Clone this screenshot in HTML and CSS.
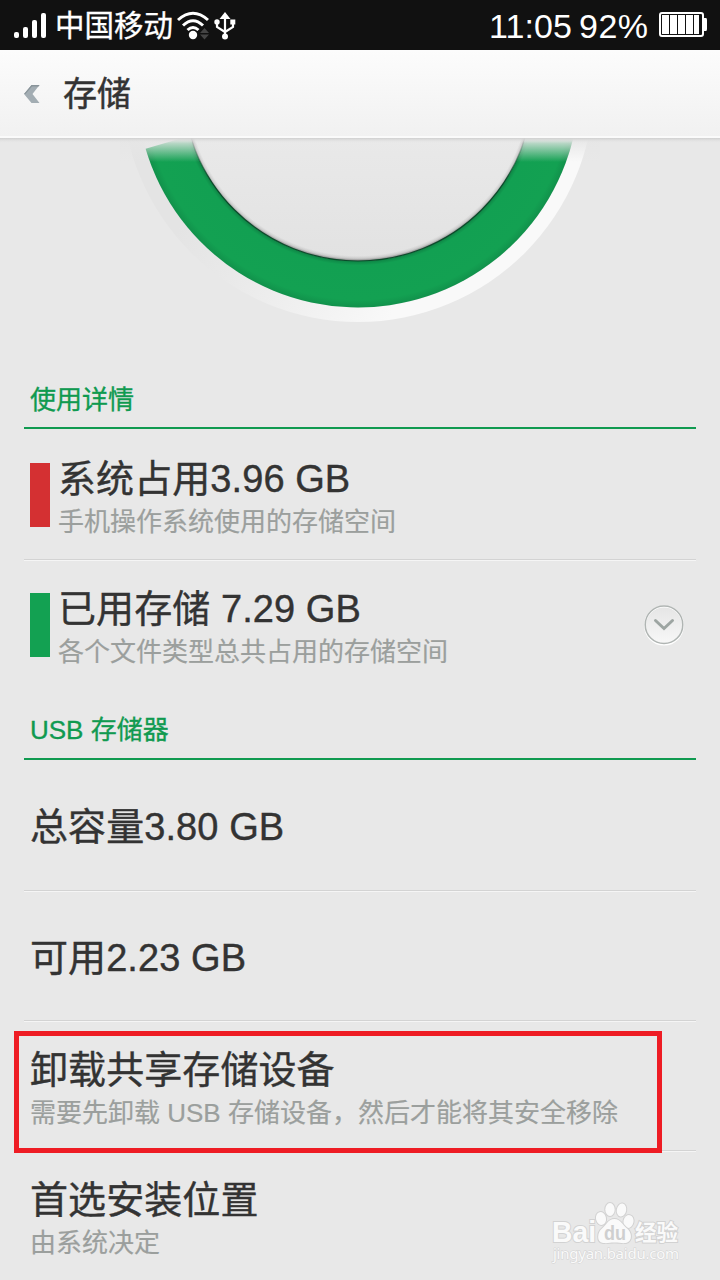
FILE: index.html
```html
<!DOCTYPE html>
<html lang="zh-CN">
<head>
<meta charset="utf-8">
<title>存储</title>
<link rel="stylesheet" href="styles.css">
</head>
<body>
<div class="screen">
  <div class="status">
    <svg class="signal" width="34" height="28" viewBox="0 0 34 28" fill="#fff"><rect x="0" y="21" width="5" height="6" rx="2"/><rect x="9" y="16" width="5" height="11" rx="2"/><rect x="18" y="9" width="5" height="18" rx="2"/><rect x="27" y="2" width="5" height="25" rx="2"/></svg>
    <span class="carrier">中国移动</span>
    <svg class="wifi" width="34" height="30" viewBox="0 0 34 30" fill="none" stroke="#fff" stroke-width="3"><path d="M1 10Q16 -3.500 31 10M6 15.500Q16 6 26 15.500M10.500 20Q16 15 21.500 20"/><circle cx="16" cy="25" r="4.200" fill="#fff" stroke="none"/><path d="M23 23h9l-4.500-5zM23 24.500h9l-4.500 5z" fill="#444" stroke="none"/></svg>
    <svg class="usb" width="22" height="30" viewBox="0 0 22 30" fill="none" stroke="#fff" stroke-width="2.200"><path d="M11 25V6M11 22L3 17V11M11 22l8-5v-5"/><path d="M5.500 9L11 2l5.500 7z" fill="#fff" stroke="none"/><circle cx="11" cy="26.500" r="3" fill="#fff" stroke="none"/><circle cx="3" cy="12" r="2.700" fill="#fff" stroke="none"/><path d="M16.300 9.500h5v5h-5z" fill="#fff" stroke="none"/></svg>
    <span class="clock">11:05</span>
    <span class="percent">92%</span>
    <svg class="battery" width="49" height="26" viewBox="0 0 49 26"><rect x="1" y="1" width="43" height="23" rx="2" fill="none" stroke="#fff" stroke-width="2"/><path d="M45 6h2q1 0 1 2v9q0 2-1 2h-2z" fill="#fff"/><path d="M3 3h7v19H3zM11 3h7v19h-7zM19 3h7v19h-7zM27 3h7v19h-7zM35 3h5v19h-5z" fill="#fff"/></svg>
  </div>
  <div class="bar">
    <svg width="16" height="20" viewBox="0 0 16 20"><path d="M7.500 1H15.500L8.500 10l7 9H7.500L0 10z" fill="#a3adb3"/><path d="M7.500 1H15.500l-1 1.500H8L1.500 10H0z" fill="#89949a"/></svg>
    <h1>存储</h1>
  </div>
  <div class="chart">
    <svg width="720" height="226" viewBox="0 138 720 226">
      <defs>
        <linearGradient id="rim" gradientUnits="userSpaceOnUse" x1="205" y1="180" x2="405" y2="290"><stop offset="0" stop-color="#e4e4e4"/><stop offset=".3" stop-color="#e9e9e9"/><stop offset=".75" stop-color="#f3f3f3"/><stop offset="1" stop-color="#f9f9f9"/></linearGradient>
        <linearGradient id="fade" gradientUnits="userSpaceOnUse" x1="0" y1="138" x2="0" y2="162"><stop offset="0" stop-color="#e6e6e6"/><stop offset=".15" stop-color="#e6e6e6" stop-opacity=".85"/><stop offset="1" stop-color="#e6e6e6" stop-opacity="0"/></linearGradient>
        <linearGradient id="disc" gradientUnits="userSpaceOnUse" x1="0" y1="138" x2="0" y2="261"><stop offset="0" stop-color="#e9e9e9"/><stop offset="1" stop-color="#e2e2e2"/></linearGradient>
        <linearGradient id="line" gradientUnits="userSpaceOnUse" x1="0" y1="140" x2="0" y2="180"><stop offset="0" stop-color="#0b5a32" stop-opacity="0"/><stop offset="1" stop-color="#0b4a2a"/></linearGradient>
        <radialGradient id="green" gradientUnits="userSpaceOnUse" cx="358" cy="86" r="221.500"><stop offset=".79" stop-color="#0e8344"/><stop offset=".81" stop-color="#12a052"/><stop offset=".965" stop-color="#13a152"/><stop offset="1" stop-color="#11914b"/></radialGradient>
        <radialGradient id="edge" gradientUnits="userSpaceOnUse" cx="358" cy="84" r="177"><stop offset=".97" stop-color="#999" stop-opacity="0"/><stop offset=".985" stop-color="#888" stop-opacity=".25"/><stop offset="1" stop-color="#555" stop-opacity=".8"/></radialGradient>
        <linearGradient id="shade" x1="0" y1="0" x2="0" y2="1"><stop offset="0" stop-color="#cfcfcf"/><stop offset="1" stop-color="#e6e6e6" stop-opacity="0"/></linearGradient>
      </defs>
      <circle cx="358" cy="86" r="236" fill="url(#rim)"/>
      <circle cx="358" cy="86" r="221.500" fill="#e8e8e8"/>
      <path d="M358 86L145.600 148.800A221.500 221.500 0 0 0 579.500 86z" fill="url(#green)"/>
      <path d="M120 138H600V162H120z" fill="url(#fade)"/>
      <circle cx="358" cy="86" r="175" fill="url(#disc)"/>
      <circle cx="358" cy="86" r="175" fill="url(#edge)"/>
      <circle cx="358" cy="86" r="175" fill="none" stroke="url(#line)" stroke-width="1.200"/>
      <path d="M0 138H720V143H0z" fill="url(#shade)"/>
    </svg>
  </div>
  <main class="list">
    <h2 class="first">使用详情</h2>
    <section class="row tagged roomy ruled">
      <i class="swatch red"></i>
      <div><p class="title">系统占用3.96 GB</p><p class="note">手机操作系统使用的存储空间</p></div>
    </section>
    <section class="row tagged">
      <i class="swatch green"></i>
      <div class="grow"><p class="title">已用存储 7.29 GB</p><p class="note">各个文件类型总共占用的存储空间</p></div>
      <svg class="expand" width="42" height="42" viewBox="0 0 42 42"><defs><linearGradient id="btn" x1="0" y1="0" x2="0" y2="1"><stop offset="0" stop-color="#e5e5e5"/><stop offset="1" stop-color="#f8f8f8"/></linearGradient></defs><circle cx="21" cy="21.500" r="19" fill="url(#btn)" stroke="#fff" stroke-width="2"/><circle cx="21" cy="20.700" r="18.800" fill="none" stroke="#b0b5b3" stroke-width="1.500"/><path d="M12.500 16.500L21 24.500l8.500-8" fill="none" stroke="#9da5a2" stroke-width="3" stroke-linecap="round"/></svg>
    </section>
    <h2 class="second">USB 存储器</h2>
    <section class="row roomy solo ruled"><p class="title">总容量3.80 GB</p></section>
    <section class="row solo ruled"><p class="title">可用2.23 GB</p></section>
    <section class="row ruled">
      <div><p class="title">卸载共享存储设备</p><p class="note">需要先卸载 USB 存储设备，然后才能将其安全移除</p></div>
      <span class="highlight"></span>
    </section>
    <section class="row">
      <div><p class="title">首选安装位置</p><p class="note">由系统决定</p></div>
    </section>
  </main>
  <svg class="watermark" width="140" height="70" viewBox="0 0 140 70">
    <g fill="#fafafa" stroke="#d2d2d2" stroke-width="2" paint-order="stroke">
      <text x="1" y="41" class="brand" textLength="44" lengthAdjust="spacingAndGlyphs">Bai</text>
      <ellipse cx="50" cy="17.500" rx="5" ry="6.500" transform="rotate(-12 50 17.500)"/><ellipse cx="59" cy="8.500" rx="4.700" ry="6.500"/><ellipse cx="70.500" cy="9" rx="4.700" ry="6.500" transform="rotate(10 70.500 9)"/><ellipse cx="77.500" cy="20.500" rx="5" ry="6.500" transform="rotate(12 77.500 20.500)"/>
      <path d="M63.500 18C57 18 55.500 24 51 27.500S45 41 52 42C57.500 42.500 58.500 41.500 63.500 41.500S70.500 42.500 75 42C82 40 81 31 75.500 27C71.500 24 69.500 18 63.500 18z"/>
      <text x="84" y="39" class="jingyan">经验</text>
      <text x="2" y="58" class="site" textLength="126">jingyan.baidu.com</text>
    </g>
    <text x="53" y="38.500" class="du" textLength="22" lengthAdjust="spacingAndGlyphs">du</text>
  </svg>
</div>
</body>
</html>
```
FILE: styles.css
```css
* { box-sizing: border-box; }
body, h1, h2, p { margin: 0; font-weight: 400; }
body { background: #e8e8e8; font-family: "Liberation Sans", "Noto Sans CJK SC", sans-serif; color: #333; }
svg { display: block; flex: none; }
.screen { position: relative; width: 720px; height: 1280px; overflow: hidden; background: #e8e8e8; }
.status { display: flex; align-items: center; height: 50px; background: #111; color: #fff; padding: 0 12px 0 14px; white-space: nowrap; }
.signal { margin-right: 7px; }
.carrier { font-size: 29.5px; line-height: 50px; width: 118px; padding-top: 1px; -webkit-text-stroke: 0.3px; }
.wifi { margin-left: 4px; }
.usb { margin-left: 3px; }
.clock, .percent { font-size: 34px; line-height: 50px; padding-top: 1px; }
.clock { margin-left: auto; width: 90px; letter-spacing: 0.1px; }
.percent { width: 80px; letter-spacing: 0.5px; }
.battery { width: 49px; }
.bar { display: flex; align-items: center; gap: 23px; height: 88px; padding: 0 24px; background: linear-gradient(#fcfcfc, #f1f1f1); border-bottom: 2px solid #fafafa; }
.bar h1 { font-size: 34px; line-height: 44px; padding-top: 2px; -webkit-text-stroke: 0.5px; }
.bar svg { margin-top: 1px; }
.chart { height: 226px; }
.list { padding: 0 24px; }
h2 { color: #109a50; font-size: 26px; border-bottom: 2px solid #109a50; padding-left: 6px; -webkit-text-stroke: 0.35px; }
.first { height: 65px; line-height: 72px; }
.second { height: 69px; line-height: 79px; }
.row { position: relative; display: flex; align-items: flex-start; height: 130px; padding: 26px 6px 0; }
.roomy { height: 132px; padding-top: 28px; }
.ruled { border-bottom: 1px solid #f5f5f5; box-shadow: inset 0 -1px #d3d3d3; }
.solo { padding-top: 3px; align-items: center; }
.title { font-size: 38px; line-height: 44px; letter-spacing: 0.08px; -webkit-text-stroke: 0.4px; }
.note { font-size: 26px; line-height: 43px; color: #9b9f9d; -webkit-text-stroke: 0.2px; }
.swatch { width: 20px; height: 64px; margin: 6px 8px 0 0; }
.red { background: #d43032; }
.green { background: #13a152; }
.grow { flex: 1; }
.expand { margin: 17px 5px 0 0; }
.highlight { position: absolute; left: -10px; top: 9px; width: 648px; height: 122px; border: 5px solid #ee1c24; z-index: 1; }
.watermark { position: absolute; left: 551px; top: 1201px; }
.brand { font: bold 30px "Liberation Sans", sans-serif; }
.du { font: bold 20px "Liberation Sans", sans-serif; fill: #cfcfcf; }
.jingyan { font: bold 21.5px "Noto Sans CJK SC", sans-serif; }
.site { font: 15px "Noto Sans", sans-serif; stroke-width: 1px; }
```
